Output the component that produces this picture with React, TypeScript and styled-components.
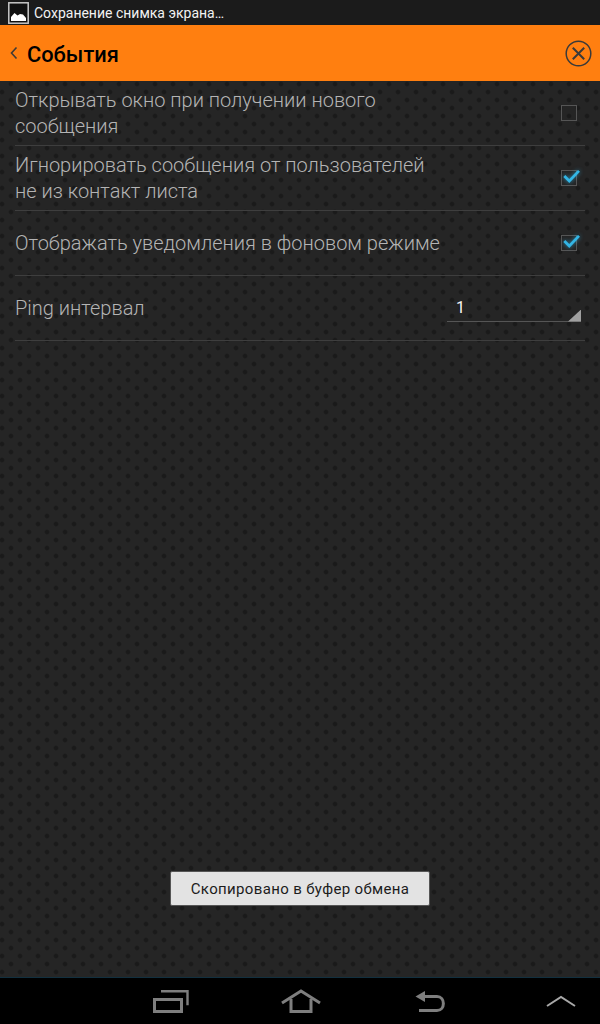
import styled, { createGlobalStyle } from "styled-components";

const GlobalStyle = createGlobalStyle`
  html, body {
    margin: 0;
    padding: 0;
    background: #000;
  }
  * {
    box-sizing: border-box;
  }
`;

const Screen = styled.div`
  position: relative;
  display: flex;
  flex-direction: column;
  width: 600px;
  height: 1024px;
  overflow: hidden;
  font-family: Roboto, "Liberation Sans", sans-serif;
`;

const StatusBar = styled.div`
  display: flex;
  align-items: center;
  gap: 5px;
  height: 25px;
  padding-left: 8px;
  background: #1b1b1b;
  color: #f2f2f2;
  font-size: 14px;
`;

const Header = styled.header`
  display: flex;
  align-items: center;
  height: 56px;
  padding: 0 8px 0 10px;
  background: #ff7f10;
`;

const Title = styled.h1`
  flex: 1;
  margin: 2px 0 0 9px;
  color: #000;
  font-size: 21.8px;
  font-weight: 500;
`;

const Content = styled.main`
  flex: 1;
  padding: 0 15px;
  background-color: #252525;
  background-image: radial-gradient(circle at center, #1a1a1a 0, #1a1a1a 1.5px, transparent 3px),
    radial-gradient(circle at center, #1a1a1a 0, #1a1a1a 1.5px, transparent 3px);
  background-size: 18px 16px;
  background-position: 2px -5px, 11px 3px;
`;

const Row = styled.div`
  display: flex;
  align-items: center;
  justify-content: space-between;
  height: 65px;
  border-bottom: 1px solid #3e3e3e;
`;

const Label = styled.div`
  color: #b4b4b4;
  font-size: 20px;
  font-weight: 300;
  line-height: 26px;
  white-space: nowrap;
`;

const CheckBox = styled.div`
  position: relative;
  width: 16px;
  height: 16px;
  margin-right: 8px;
  border: 1px solid #555;
`;

const Tick = styled.svg`
  position: absolute;
  left: -1px;
  top: -1px;
  filter: drop-shadow(0 0 2px rgba(51, 181, 229, 0.7));
`;

const SpinnerBox = styled.div`
  position: relative;
  width: 134px;
  height: 32px;
  margin: 0 4px 5px 0;
  padding: 6px 0 0 9px;
  border-bottom: 1px solid #555;
  color: #f5f5f5;
  font-size: 16px;
  font-weight: 400;
  line-height: 24px;
`;

const SpinnerCorner = styled.div`
  position: absolute;
  right: 0;
  bottom: -1px;
  width: 13px;
  height: 12px;
  background: #a0a0a0;
  clip-path: polygon(100% 0, 100% 100%, 0 100%);
`;

const Toast = styled.div`
  position: absolute;
  left: 170px;
  top: 871px;
  display: flex;
  align-items: center;
  justify-content: center;
  width: 260px;
  height: 35px;
  border: 1px solid #555;
  border-radius: 2px;
  background: #e3e3e3;
  color: #1c1c1c;
  font-size: 15px;
  letter-spacing: 0.35px;
`;

const NavBar = styled.nav`
  display: flex;
  align-items: center;
  height: 47px;
  padding-left: 106px;
  border-top: 1px solid #12303f;
  background: #000;
`;

const NavSlot = styled.div`
  display: flex;
  flex: 0 0 130px;
  justify-content: center;
`;

const ScreenshotIcon = () => (
  <svg width="21" height="22" viewBox="0 0 21 22">
    <rect x="0.800" y="0.800" width="19.400" height="20.400" fill="#111" stroke="#c8c8c8" strokeWidth="1.500" />
    <path d="M3 19v-4l3.500-4 3 2.500 2.500-1.500 3 0.500 3 3.500v3z" fill="#fff" />
  </svg>
);

const BackChevron = () => (
  <svg width="8" height="14" viewBox="0 0 8 14">
    <path d="M6.500 1.500 1.500 7l5 5.500" fill="none" stroke="#3f3a36" strokeWidth="1.600" />
  </svg>
);

const CloseIcon = () => (
  <svg width="27" height="27" viewBox="0 0 27 27">
    <circle cx="13.500" cy="13.500" r="12.300" fill="none" stroke="#3a3a3a" strokeWidth="1.500" />
    <path d="M7.800 7.800 19.200 19.200M19.200 7.800 7.800 19.200" stroke="#3a3a3a" strokeWidth="2" />
  </svg>
);

const TickIcon = () => (
  <Tick width="20" height="14" viewBox="0 0 20 14">
    <path d="M3.300 6 8.300 11 18 0.900" fill="none" stroke="#33b5e5" strokeWidth="2.800" />
  </Tick>
);

const RecentIcon = () => (
  <svg width="36" height="23" viewBox="0 0 36 23">
    <path d="M1.500 9.500h27v12h-27z" fill="none" stroke="#7e7e7e" strokeWidth="3" />
    <path d="M8 1.200h26.500v14" fill="none" stroke="#7e7e7e" strokeWidth="2.400" />
  </svg>
);

const HomeIcon = () => (
  <svg width="40" height="24" viewBox="0 0 40 24">
    <path d="M1 14 20 2l19 12" fill="none" stroke="#7e7e7e" strokeWidth="3" />
    <path d="M10 10v12.500h20V10" fill="none" stroke="#7e7e7e" strokeWidth="3" />
  </svg>
);

const BackIcon = () => (
  <svg width="32" height="21" viewBox="0 0 32 21">
    <path d="M0.500 5.500 10 0v11z" fill="#7e7e7e" />
    <path d="M8 5.500h14c8.500 0 8.500 14 0 14H4" fill="none" stroke="#7e7e7e" strokeWidth="3" />
  </svg>
);

const UpIcon = () => (
  <svg width="30" height="12" viewBox="0 0 30 12">
    <path d="M1 11 15 2l14 9" fill="none" stroke="#a8a8a8" strokeWidth="2" />
  </svg>
);

const App = () => {
  return (
    <Screen>
      <GlobalStyle />
      <StatusBar>
        <ScreenshotIcon />
        Сохранение снимка экрана…
      </StatusBar>
      <Header>
        <BackChevron />
        <Title>События</Title>
        <CloseIcon />
      </Header>
      <Content>
        <Row>
          <Label>
            Открывать окно при получении нового
            <br />
            сообщения
          </Label>
          <CheckBox />
        </Row>
        <Row>
          <Label>
            Игнорировать сообщения от пользователей
            <br />
            не из контакт листа
          </Label>
          <CheckBox>
            <TickIcon />
          </CheckBox>
        </Row>
        <Row>
          <Label>Отображать уведомления в фоновом режиме</Label>
          <CheckBox>
            <TickIcon />
          </CheckBox>
        </Row>
        <Row>
          <Label>Ping интервал</Label>
          <SpinnerBox>
            1
            <SpinnerCorner />
          </SpinnerBox>
        </Row>
      </Content>
      <Toast>Скопировано в буфер обмена</Toast>
      <NavBar>
        <NavSlot>
          <RecentIcon />
        </NavSlot>
        <NavSlot>
          <HomeIcon />
        </NavSlot>
        <NavSlot>
          <BackIcon />
        </NavSlot>
        <NavSlot>
          <UpIcon />
        </NavSlot>
      </NavBar>
    </Screen>
  );
};

export default App;
